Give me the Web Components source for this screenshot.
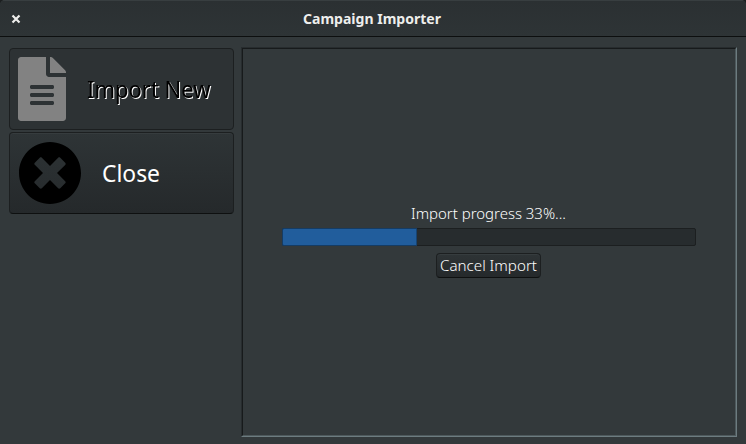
<!DOCTYPE html>
<html lang="en">
<head>
<meta charset="utf-8">
<title>Campaign Importer</title>
<style>
html, body { margin: 0; height: 100%; overflow: hidden; background: #1c1f20; }
body { font-family: "Noto Sans", "Open Sans", sans-serif; }
</style>
</head>
<body>
<importer-window>
  <window-header slot="header"></window-header>
  <nav-button slot="nav" state="disabled">
    <file-icon slot="icon"></file-icon>
    <fit-label text="Import New" width="123.5" size="23" height="30" baseline="24"></fit-label>
  </nav-button>
  <nav-button slot="nav">
    <close-icon slot="icon"></close-icon>
    <fit-label text="Close" width="58" size="23" height="30" baseline="24"></fit-label>
  </nav-button>
  <progress-pane></progress-pane>
</importer-window>
<script>
const define = (name, html, setup) => {
  const tpl = document.createElement('template');
  tpl.innerHTML = html;
  customElements.define(name, class extends HTMLElement {
    constructor() {
      super();
      this.attachShadow({ mode: 'open' }).append(tpl.content.cloneNode(true));
    }
    connectedCallback() { if (setup) setup(this); }
  });
};

// Single-line label whose text spans an exact width.
define('fit-label', `<style>
  :host { display: block; flex: none; }
  svg { display: block; overflow: visible; }
  text { fill: currentColor; font-family: inherit; font-weight: inherit; }
</style><svg><text x="0" lengthAdjust="spacingAndGlyphs"></text></svg>`, el => {
  const svg = el.shadowRoot.querySelector('svg'), t = svg.firstElementChild, a = n => el.getAttribute(n);
  svg.setAttribute('width', a('width'));
  svg.setAttribute('height', a('height'));
  t.setAttribute('textLength', a('width'));
  t.setAttribute('y', a('baseline'));
  t.setAttribute('font-size', a('size'));
  t.textContent = a('text');
});

define('importer-window', `<style>
  :host { display: flex; flex-direction: column; width: 746px; height: 444px; box-sizing: border-box;
    background: #33393b; border-radius: 5px 5px 0 0; overflow: hidden; }
  main { flex: 1; display: flex; gap: 7px; padding: 10px 9px 7px; min-height: 0; }
  nav { display: flex; flex-direction: column; gap: 2px; width: 225px; padding-top: 1px; }
</style><slot name="header"></slot><main><nav><slot name="nav"></slot></nav><slot></slot></main>`);

define('window-header', `<style>
  :host { display: grid; grid-template-columns: 1fr auto 1fr; align-items: center; height: 37px;
    box-sizing: border-box; padding: 0 13px 0 11px; background: linear-gradient(#2b3032, #2e3436);
    border-top: 1px solid #383e40; border-bottom: 1px solid #0d0f0f; color: #eeeeec; font-weight: 700; }
  svg { display: block; }
</style>
<svg width="10" height="10" viewBox="0 0 10 10"><path d="M1.500 1.500 8.500 8.500M8.500 1.500 1.500 8.500" stroke="#eeeeec" stroke-width="2.200"/></svg>
<fit-label text="Campaign Importer" width="138" size="13.8" height="20" baseline="15"></fit-label>`);

define('nav-button', `<style>
  :host { display: flex; align-items: center; box-sizing: border-box; height: 82px; gap: 20px; padding: 0 8px;
    border: 1px solid #1c1f20; border-radius: 4px; color: #fff;
    background: linear-gradient(#2e3436, #25292b); box-shadow: inset 0 1px #363c3e; border-bottom-color: #0e1010; }
  :host([state="disabled"]) { background: #2d3234; color: #000; gap: 21px; box-shadow: none;
    border-bottom-color: #1c1f20; }
  :host([state="disabled"]) ::slotted(fit-label) { filter: drop-shadow(1px 1px 0 #fff); }
</style><slot name="icon"></slot><slot></slot>`);

define('file-icon', `<style>:host { display: block; color: #828282; } svg { display: block; }</style>
<svg width="48" height="64" viewBox="0 0 384 512" fill="currentColor"><path d="M224 136V0H24C10.700 0 0 10.700 0 24v464c0 13.300 10.700 24 24 24h336c13.300 0 24-10.700 24-24V160H248c-13.200 0-24-10.800-24-24zm64 236c0 6.600-5.400 12-12 12H108c-6.600 0-12-5.400-12-12v-8c0-6.600 5.400-12 12-12h168c6.600 0 12 5.400 12 12v8zm0-64c0 6.600-5.400 12-12 12H108c-6.600 0-12-5.400-12-12v-8c0-6.600 5.400-12 12-12h168c6.600 0 12 5.400 12 12v8zm0-72v8c0 6.600-5.400 12-12 12H108c-6.600 0-12-5.400-12-12v-8c0-6.600 5.400-12 12-12h168c6.600 0 12 5.400 12 12zm96-114.100v6.100H256V0h6.100c6.400 0 12.500 2.500 17 7l97.900 98c4.500 4.500 7 10.600 7 16.900z"/></svg>`);

define('close-icon', `<style>:host { display: block; color: #000; } svg { display: block; }</style>
<svg width="64" height="64" viewBox="0 0 512 512" fill="currentColor"><path d="M256 8C119 8 8 119 8 256s111 248 248 248 248-111 248-248S393 8 256 8zm121.600 313.100c4.700 4.700 4.700 12.300 0 17L338 377.600c-4.700 4.700-12.300 4.700-17 0L256 312l-65.100 65.600c-4.700 4.700-12.300 4.700-17 0L134.400 338c-4.700-4.700-4.700-12.300 0-17l65.600-65-65.600-65.100c-4.700-4.700-4.700-12.300 0-17l39.600-39.600c4.700-4.700 12.300-4.700 17 0l65 65.700 65.100-65.600c4.700-4.700 12.300-4.700 17 0l39.600 39.600c4.700 4.700 4.700 12.300 0 17L312 256l65.600 65.100z"/></svg>`);

define('progress-bar', `<style>
  :host { display: block; align-self: stretch; height: 18px; box-sizing: border-box;
    border: 1px solid #1c1f20; border-radius: 2px; background: #272c2e; }
  div { width: 135px; height: 18px; margin: -1px; box-sizing: border-box; background: #215d9c;
    border: 1px solid #153c64; border-right-color: #184472; border-radius: 2px 0 0 2px; }
</style><div></div>`);

define('push-button', `<style>
  :host { display: flex; align-items: center; justify-content: center; box-sizing: border-box; width: 105px; height: 25px;
    margin-right: 2px; border: 1px solid #1c1f20; border-bottom-color: #0e1010; border-radius: 4px;
    background: linear-gradient(#2e3436, #25292b); box-shadow: inset 0 1px #363c3e; }
</style><slot></slot>`);

define('progress-pane', `<style>
  :host { display: block; flex: none; width: 496px; height: 390px; box-sizing: border-box;
    border: 1px solid; border-color: #272c2e #6d7c80 #6d7c80 #272c2e; }
  section { display: flex; flex-direction: column; align-items: center; box-sizing: border-box; height: 100%;
    border: 1px solid; border-color: #171a1b #4e595c #4e595c #171a1b; padding: 155px 39px 0; color: #fff; font-weight: 300; }
  section > fit-label { margin-right: 2px; }
  progress-bar { margin: 4px 0 7px; }
</style><section>
  <fit-label text="Import progress 33%..." width="155" size="15.2" height="20" baseline="15"></fit-label>
  <progress-bar></progress-bar>
  <push-button><fit-label text="Cancel Import" width="97" size="15.2" height="20" baseline="15"></fit-label></push-button>
</section>`);
</script>
</body>
</html>
